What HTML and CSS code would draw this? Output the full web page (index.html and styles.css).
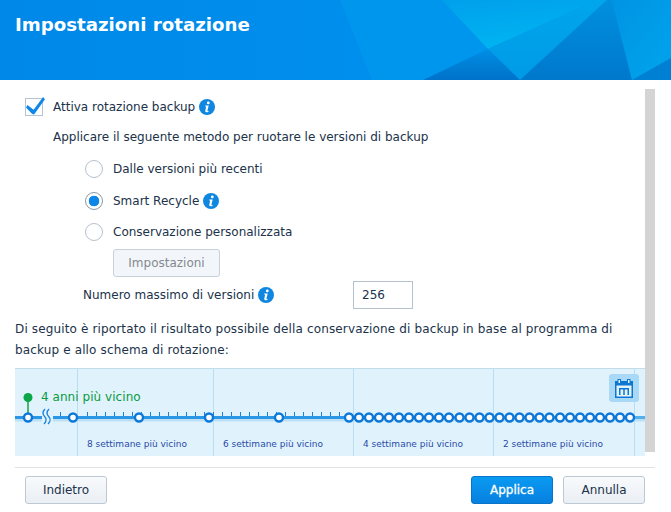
FILE: index.html
```html
<!DOCTYPE html>
<html lang="it">
<head>
<meta charset="utf-8">
<title>Impostazioni rotazione</title>
<link rel="stylesheet" href="styles.css">
</head>
<body>
<div class="dialog">
  <header class="banner">
    <svg class="banner-art" viewBox="0 0 671 80" preserveAspectRatio="none" aria-hidden="true">
      <defs>
        <linearGradient id="g1" x1="0" y1="0" x2="1" y2="0"><stop offset="0" stop-color="#0088e8"/><stop offset="0.5" stop-color="#008eec"/><stop offset="1" stop-color="#0098ee"/></linearGradient>
        <linearGradient id="g2" x1="0" y1="0" x2="0.3" y2="1"><stop offset="0" stop-color="#00a0ec"/><stop offset="1" stop-color="#00b4f0"/></linearGradient>
        <linearGradient id="g3" x1="0" y1="0" x2="0" y2="1"><stop offset="0" stop-color="#00a6ec"/><stop offset="1" stop-color="#009ae6"/></linearGradient>
        <linearGradient id="g4" x1="0" y1="0" x2="0" y2="1"><stop offset="0" stop-color="#008ee4"/><stop offset="1" stop-color="#0072ca"/></linearGradient>
        <linearGradient id="g5" x1="0" y1="0" x2="0" y2="1"><stop offset="0" stop-color="#0090de"/><stop offset="1" stop-color="#0078cc"/></linearGradient>
        <linearGradient id="g6" x1="0" y1="0" x2="1" y2="1"><stop offset="0" stop-color="#0094e4"/><stop offset="1" stop-color="#00a4ec"/></linearGradient>
      </defs>
      <rect width="671" height="80" fill="url(#g1)"/>
      <polygon points="340,0 442,0 488,49 423,80 372,80" fill="#0096ee"/>
      <polygon points="442,0 597,0 488,49" fill="url(#g2)"/>
      <polygon points="597,0 607,0 520,80 488,49" fill="url(#g3)"/>
      <polygon points="488,49 423,80 520,80" fill="url(#g4)"/>
      <polygon points="607,0 612,0 632,80 520,80" fill="url(#g5)"/>
      <polygon points="612,0 671,0 671,58 632,80" fill="url(#g6)"/>
      <polygon points="632,80 671,58 671,80" fill="#0080d2"/>
    </svg>
    <h1 class="banner-title">Impostazioni rotazione</h1>
  </header>

  <main class="content">
    <div class="form">
      <div class="row check-row">
        <span class="checkbox">
          <svg viewBox="0 0 20 20" class="check-mark" aria-hidden="true"><path d="M1.500 9.500 L8 14.500 L18 1 L20 3.500 L8.500 19.500 L6.500 19 L0 12 Z" fill="#0f86e8"/></svg>
        </span>
        <span>Attiva rotazione backup</span>
        <svg class="info" viewBox="0 0 16 16" aria-hidden="true"><use href="#info-icon"/></svg>
      </div>
      <p class="row indent-1 desc">Applicare il seguente metodo per ruotare le versioni di backup</p>
      <div class="row indent-2 radio-row"><span class="radio"></span><span>Dalle versioni più recenti</span></div>
      <div class="row indent-2 radio-row"><span class="radio radio-on"></span><span>Smart Recycle</span><svg class="info" viewBox="0 0 16 16" aria-hidden="true"><use href="#info-icon"/></svg></div>
      <div class="row indent-2 radio-row"><span class="radio"></span><span>Conservazione personalizzata</span></div>
      <div class="row indent-3"><button class="btn btn-disabled" type="button">Impostazioni</button></div>
      <div class="row indent-4 max-row">
        <div class="max-label"><span>Numero massimo di versioni</span><svg class="info" viewBox="0 0 16 16" aria-hidden="true"><use href="#info-icon"/></svg></div>
        <input class="num" type="text" value="256">
      </div>
      <p class="note">Di seguito è riportato il risultato possibile della conservazione di backup in base al programma di backup e allo schema di rotazione:</p>

      <div class="timeline">
        <div class="segment seg-a"></div>
        <div class="segment seg-b"><span class="seg-label">8 settimane più vicino</span></div>
        <div class="segment seg-c"><span class="seg-label">6 settimane più vicino</span></div>
        <div class="segment seg-c2"><span class="seg-label">4 settimane più vicino</span></div>
        <div class="segment seg-c3"><span class="seg-label">2 settimane più vicino</span></div>
        <div class="segment seg-d"></div>
        <svg class="axis" viewBox="0 0 630 88" aria-hidden="true">
          <rect x="0" y="50.500" width="630" height="3" fill="#bcdff5"/>
          <path class="ticks" d="M36.500 44v4M45.500 44v4M72.500 44v4M81.500 44v4M90.500 44v4M99.500 44v4M108.500 44v4M117.500 44v4M126.500 44v4M135.500 44v4M144.500 44v4M153.500 44v4M162.500 44v4M171.500 44v4M180.500 44v4M189.500 44v4M198.500 44v4M207.500 44v4M216.500 44v4M225.500 44v4M234.500 44v4M243.500 44v4M252.500 44v4M261.500 44v4M270.500 44v4M279.500 44v4M288.500 44v4M297.500 44v4M306.500 44v4M315.500 44v4M324.500 44v4"/>
          <rect x="0" y="48" width="615" height="3" fill="#2a96e6"/>
          <rect x="615" y="48" width="15" height="3" fill="#52b0ec"/>
          <path d="M13 30v18" stroke="#0a9a3c" stroke-width="1.400" fill="none"/>
          <circle cx="13" cy="29.500" r="4.500" fill="#0aa648"/>
          <rect x="27" y="44" width="11" height="10" fill="#e0f3fd"/>
          <path d="M30 41c-3 3-2 6 0 8s1 5-1 7M34 41c-3 3-2 6 0 8s1 5-1 7" fill="none" stroke="#1a80dc" stroke-width="1.300"/>
          <g class="nodes">
            <circle cx="13" cy="49.500" r="4"/><circle cx="58" cy="49.500" r="4"/><circle cx="124" cy="49.500" r="4"/><circle cx="194" cy="49.500" r="4"/><circle cx="264" cy="49.500" r="4"/>
            <circle cx="334" cy="49.500" r="4"/><circle cx="344" cy="49.500" r="4"/><circle cx="354" cy="49.500" r="4"/><circle cx="364" cy="49.500" r="4"/><circle cx="374" cy="49.500" r="4"/><circle cx="384" cy="49.500" r="4"/><circle cx="394" cy="49.500" r="4"/><circle cx="404" cy="49.500" r="4"/><circle cx="414" cy="49.500" r="4"/><circle cx="424" cy="49.500" r="4"/><circle cx="434" cy="49.500" r="4"/><circle cx="444.500" cy="49.500" r="4"/><circle cx="454.500" cy="49.500" r="4"/><circle cx="464.500" cy="49.500" r="4"/><circle cx="474.500" cy="49.500" r="4"/><circle cx="484.500" cy="49.500" r="4"/><circle cx="494.500" cy="49.500" r="4"/><circle cx="504.500" cy="49.500" r="4"/><circle cx="514.500" cy="49.500" r="4"/><circle cx="524.500" cy="49.500" r="4"/><circle cx="534.500" cy="49.500" r="4"/><circle cx="545" cy="49.500" r="4"/><circle cx="555" cy="49.500" r="4"/><circle cx="565" cy="49.500" r="4"/><circle cx="575" cy="49.500" r="4"/><circle cx="585" cy="49.500" r="4"/><circle cx="595" cy="49.500" r="4"/><circle cx="605" cy="49.500" r="4"/><circle cx="615" cy="49.500" r="4"/>
          </g>
        </svg>
        <span class="nearest">4 anni più vicino</span>
        <span class="cal-btn">
          <svg viewBox="0 0 20 20" class="cal-icon" aria-hidden="true">
            <rect x="1.750" y="3.750" width="16.500" height="15.500" fill="#e3f3fd" stroke="#0e78d0" stroke-width="1.500"/>
            <rect x="2" y="4" width="16" height="3.500" fill="#0e78d0"/>
            <rect x="4" y="1.500" width="2.500" height="4" fill="#e3f3fd" stroke="#0e78d0" stroke-width="1"/>
            <rect x="13.500" y="1.500" width="2.500" height="4" fill="#e3f3fd" stroke="#0e78d0" stroke-width="1"/>
            <path d="M5.750 17v-6.250h8.500v6.250M10 10.750v6.250" fill="none" stroke="#0e78d0" stroke-width="1.500"/>
          </svg>
        </span>
      </div>
    </div>
    <div class="scrollbar"></div>
  </main>

  <footer class="footer">
    <button class="btn" type="button">Indietro</button>
    <div class="footer-right">
      <button class="btn btn-primary" type="button">Applica</button>
      <button class="btn" type="button">Annulla</button>
    </div>
  </footer>
</div>

<svg class="defs" aria-hidden="true">
  <symbol id="info-icon" viewBox="0 0 16 16">
    <circle cx="8" cy="8" r="8" fill="#0f86e0"/>
    <circle cx="9.300" cy="3.900" r="1.400" fill="#fff"/>
    <path d="M6.300 6.500h3.400l-1.300 5.300c0 .4.300.4 1.200 0l-.1.900c-1.200.7-3.300 1-3.300-.6l1-4.500-1 -.2z" fill="#fff"/>
  </symbol>
</svg>
</body>
</html>
```

FILE: styles.css
```css
* { box-sizing: border-box; }
html, body { margin: 0; padding: 0; }
body {
  width: 671px;
  height: 512px;
  overflow: hidden;
  background: #fff;
  font-family: "DejaVu Sans", sans-serif;
  font-size: 12px;
  color: #20324a;
}
.dialog { display: flex; flex-direction: column; height: 512px; }
.banner { position: relative; height: 80px; flex: none; overflow: hidden; }
.banner-art { position: absolute; inset: 0; width: 100%; height: 100%; display: block; }
.banner-title {
  position: relative;
  margin: 0;
  padding: 14px 0 0 15px;
  font-size: 18.200px;
  line-height: 22px;
  font-weight: 700;
  color: #fff;
}
.content { flex: none; height: 378px; display: flex; padding: 9px 16px 0 15px; }
.form { width: 630px; }
.scrollbar { width: 10px; height: 363px; background: #d4d4d4; }
.row { display: flex; align-items: center; margin: 0; }
.check-row { height: 20px; margin: 8px 0 0 10px; }
.checkbox {
  position: relative;
  width: 18px; height: 18px;
  margin-right: 10px;
  border: 1px solid #b5c5d6;
  background: #fff;
}
.check-mark { position: absolute; left: 0; top: -3px; width: 19px; height: 19px; }
.info { width: 16px; height: 16px; margin-left: 4px; flex: none; }
.desc { margin: 12px 0 0 38px; height: 16px; }
.indent-2 { margin-left: 70px; }
.radio-row { height: 18px; }
.desc + .radio-row { margin-top: 15px; }
.desc + .radio-row + .radio-row { margin-top: 14px; }
.desc + .radio-row + .radio-row + .radio-row { margin-top: 13px; }
.radio {
  width: 18px; height: 18px;
  margin-right: 10px;
  border-radius: 50%;
  border: 1px solid #b5c1cd;
  background: #fff;
  flex: none;
}
.radio-on { background: radial-gradient(circle, #0c86e8 0 5px, #fff 5.600px); border-color: #8b98a8; }
.indent-3 { margin: 8px 0 0 98px; }
.btn {
  height: 28px;
  min-width: 82px;
  padding: 0 14px;
  border: 1px solid #bcc8d4;
  border-radius: 3px;
  background: linear-gradient(#f8fafc, #eaeff4);
  font: 12px "DejaVu Sans", sans-serif;
  color: #20324a;
}
.btn-disabled { width: 107px; color: #84898f; border-color: #c6d1dc; background: #f2f6fa; }
.btn-primary {
  border-color: #0a74c8;
  background: linear-gradient(#0a9af2, #0780e0);
  color: #fff;
  -webkit-text-stroke: 0.3px #fff;
}
.indent-4 { margin: 4px 0 0 68px; }
.max-row { height: 28px; }
.max-label { display: flex; align-items: center; width: 270px; }
.num {
  width: 60px; height: 28px;
  padding: 0 8px;
  border: 1px solid #b5c1cd;
  font: 12px "DejaVu Sans", sans-serif;
  color: #20324a;
}
.note { margin: 10px 0 0; line-height: 21px; height: 42px; letter-spacing: 0.14px; }
.timeline {
  position: relative;
  display: flex;
  width: 630px;
  height: 88px;
  margin-top: 7px;
  background: #e0f3fd;
  border-top: 1px solid #c3dcea;
  overflow: hidden;
}
.segment {
  position: relative;
  height: 100%;
  border-right: 1px solid #b9def3;
  flex: none;
}
.seg-a { width: 63px; }
.seg-b { width: 136px; }
.seg-c { width: 140px; }
.seg-c2 { width: 140px; }
.seg-c3 { width: 141px; }
.seg-d { width: 10px; border-right: 0; }
.seg-label {
  position: absolute;
  left: 9px;
  top: 69px;
  font-size: 9px;
  line-height: 12px;
  white-space: nowrap;
  color: #2a4aa8;
}
.axis { position: absolute; left: 0; top: -1px; width: 630px; height: 88px; }
.ticks { stroke: #1a80dc; stroke-width: 1; fill: none; }
.nodes circle { fill: #fff; stroke: #0e78d8; stroke-width: 2.400; }
.nearest {
  position: absolute;
  left: 26px;
  top: 20px;
  font-size: 12px;
  line-height: 16px;
  letter-spacing: 0.05px;
  color: #0a9a3c;
}
.cal-btn {
  position: absolute;
  right: 6px;
  top: 5px;
  width: 30px;
  height: 28px;
  display: flex;
  align-items: center;
  justify-content: center;
  border-radius: 3px;
  background: #aad8f7;
}
.cal-icon { width: 20px; height: 20px; }
.footer {
  flex: none;
  display: flex;
  justify-content: space-between;
  align-items: flex-start;
  height: 45px;
  margin: 9px 16px 0 15px;
  padding: 8px 10px 0;
  border-top: 1px solid #e2e2e2;
}
.footer-right { display: flex; gap: 10px; }
.footer .btn-primary { width: 82px; }
.defs { position: absolute; width: 0; height: 0; }
```
